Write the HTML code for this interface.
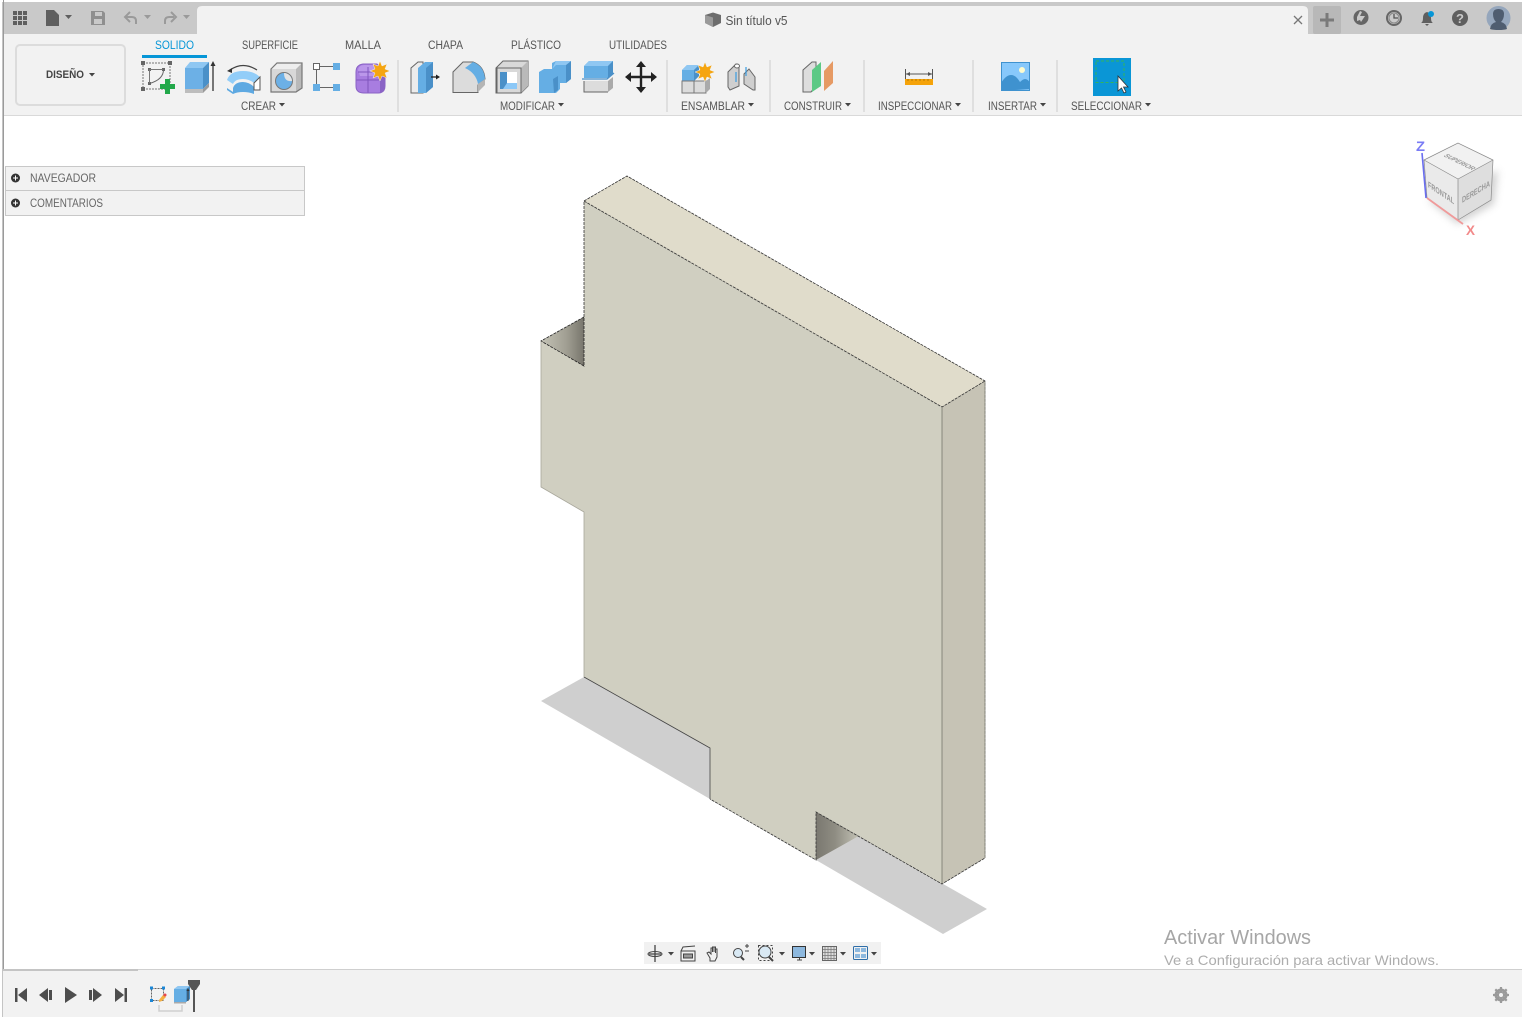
<!DOCTYPE html>
<html lang="es">
<head>
<meta charset="utf-8">
<title>Sin título v5</title>
<style>
html,body{margin:0;padding:0;width:1522px;height:1017px;overflow:hidden;background:#fff}
svg{display:block}
text{font-family:"Liberation Sans",sans-serif}
.t{font-size:11.5px;fill:#555}
</style>
</head>
<body>
<svg width="1522" height="1017" viewBox="0 0 1522 1017" xmlns="http://www.w3.org/2000/svg">
<defs>
<filter id="blur" x="-30%" y="-30%" width="160%" height="160%"><feGaussianBlur stdDeviation="4"/></filter>
<linearGradient id="nl" x1="0" y1="0" x2="1" y2="0"><stop offset="0" stop-color="#c4c3b6"/><stop offset="0.6" stop-color="#a09e92"/><stop offset="1" stop-color="#77756c"/></linearGradient>
<linearGradient id="nb" x1="0" y1="0" x2="1" y2="0"><stop offset="0" stop-color="#7a7870"/><stop offset="0.45" stop-color="#8f8d83"/><stop offset="1" stop-color="#c4c3b6"/></linearGradient>
</defs>

<!-- chrome -->
<rect width="1522" height="1017" fill="#fff"/>
<rect x="3" y="2" width="1519" height="32" fill="#c9c9c9"/>
<path d="M197 34V11q0-5 5-5H1303q5 0 5 5V34Z" fill="#f2f2f2"/>
<rect x="3" y="34" width="1519" height="81" fill="#f2f2f2"/>
<rect x="3" y="115" width="1519" height="1" fill="#d9d9d9"/>
<rect x="3" y="0" width="1" height="1017" fill="#9a9a9a"/>
<rect x="2" y="2" width="1" height="1015" fill="#c4c4c4"/>

<!-- top left icons -->
<g fill="#5f5f5f">
<rect x="13" y="11" width="4" height="4"/><rect x="18" y="11" width="4" height="4"/><rect x="23" y="11" width="4" height="4"/>
<rect x="13" y="16" width="4" height="4"/><rect x="18" y="16" width="4" height="4"/><rect x="23" y="16" width="4" height="4"/>
<rect x="13" y="21" width="4" height="4"/><rect x="18" y="21" width="4" height="4"/><rect x="23" y="21" width="4" height="4"/>
<path d="M46 10h8l5 5v11H46Z"/>
<path d="M65 15h7l-3.500 4Z"/>
</g>
<path fill-rule="evenodd" d="M91 11h12l2 2v12H91ZM95 12v4h7v-4ZM94 19v5h8v-5Z" fill="#8f8f8f"/>
<g fill="none" stroke="#9a9a9a" stroke-width="2"><path d="M136 24v-3q0-4-4-4h-6"/><path d="M130 12l-5 5 5 5"/><path d="M165 24v-3q0-4 4-4h5"/><path d="M171 12l5 5-5 5"/></g>
<path d="M144 15h7l-3.500 4ZM183 15h7l-3.500 4Z" fill="#9a9a9a"/>

<!-- title -->
<path d="M705 15l8-2.500 8 2.500v8l-8 4-8-4Z" fill="#6d6d6d"/><path d="M705 15l8 2.500v9.500l-8-4Z" fill="#9a9a9a"/>
<text x="725.500" y="25" font-size="12.500" fill="#555" textLength="62" lengthAdjust="spacingAndGlyphs">Sin título v5</text>
<path d="M1294 16l8 8M1302 16l-8 8" stroke="#777" stroke-width="1.300"/>

<!-- top right icons -->
<rect x="1313" y="6" width="28" height="28" rx="2" fill="#b8b8b8"/>
<path d="M1327 13v14M1320 20h14" stroke="#7a7a7a" stroke-width="3"/>
<circle cx="1361" cy="17.500" r="7.500" fill="#666"/><path d="M1357 17l3-6 2 1-2 4 5 0-4 6-1-2-3 1Z" fill="#c9c9c9"/>
<circle cx="1394" cy="18" r="7" fill="none" stroke="#666" stroke-width="2"/><circle cx="1394" cy="18" r="5" fill="none" stroke="#888"/><path d="M1394 14v4h4" fill="none" stroke="#555" stroke-width="1.300"/>
<path d="M1421 23q2-1 2-5 0-5 4-6 4 1 4 6 0 4 2 5Z M1425 24h4l-2 2Z" fill="#5f5f5f"/><circle cx="1431" cy="14" r="3" fill="#0696d7"/>
<circle cx="1460" cy="18" r="8" fill="#5f5f5f"/>
<text x="1460" y="23" font-size="13" font-weight="bold" fill="#c9c9c9" text-anchor="middle">?</text>
<circle cx="1498.500" cy="18" r="12" fill="#95a6bc"/>
<path d="M1490 29q1-6 6-7-3-3-3-8 0-5 5.500-5 5.500 0 5.500 5 0 5-3 8 5 1 6 7-3 1-8 1-6 0-9-1Z" fill="#4f5d70"/>

<!-- tabs -->
<g class="t">
<text x="155" y="49" textLength="39" lengthAdjust="spacingAndGlyphs" style="fill:#0696d7">SOLIDO</text>
<text x="242" y="49" textLength="56" lengthAdjust="spacingAndGlyphs">SUPERFICIE</text>
<text x="345" y="49" textLength="36" lengthAdjust="spacingAndGlyphs">MALLA</text>
<text x="428" y="49" textLength="35" lengthAdjust="spacingAndGlyphs">CHAPA</text>
<text x="511" y="49" textLength="50" lengthAdjust="spacingAndGlyphs">PLÁSTICO</text>
<text x="609" y="49" textLength="58" lengthAdjust="spacingAndGlyphs">UTILIDADES</text>
</g>
<rect x="142" y="55" width="65" height="3" fill="#0696d7"/>

<!-- diseño -->
<rect x="16" y="45" width="109" height="60" rx="4" fill="#f2f2f2" stroke="#dcdcdc" stroke-width="2"/>
<text x="46" y="78" font-size="11" font-weight="bold" fill="#444" textLength="38" lengthAdjust="spacingAndGlyphs">DISEÑO</text>
<path d="M89 73h6l-3 3.500Z" fill="#444"/>

<!-- group labels -->
<g class="t">
<text x="241" y="110" textLength="35" lengthAdjust="spacingAndGlyphs">CREAR</text>
<text x="500" y="110" textLength="55" lengthAdjust="spacingAndGlyphs">MODIFICAR</text>
<text x="681" y="110" textLength="64" lengthAdjust="spacingAndGlyphs">ENSAMBLAR</text>
<text x="784" y="110" textLength="58" lengthAdjust="spacingAndGlyphs">CONSTRUIR</text>
<text x="878" y="110" textLength="74" lengthAdjust="spacingAndGlyphs">INSPECCIONAR</text>
<text x="988" y="110" textLength="49" lengthAdjust="spacingAndGlyphs">INSERTAR</text>
<text x="1071" y="110" textLength="71" lengthAdjust="spacingAndGlyphs">SELECCIONAR</text>
</g>
<path d="M279 103h6l-3 3.500ZM558 103h6l-3 3.500ZM748 103h6l-3 3.500ZM845 103h6l-3 3.500ZM955 103h6l-3 3.500ZM1040 103h6l-3 3.500ZM1145 103h6l-3 3.500Z" fill="#444"/>
<g fill="#dfdfdf"><rect x="397" y="60" width="2" height="52"/><rect x="666" y="60" width="2" height="52"/><rect x="769" y="60" width="2" height="52"/><rect x="863" y="60" width="2" height="52"/><rect x="972" y="60" width="2" height="52"/><rect x="1056" y="60" width="2" height="52"/></g>

<!-- CREAR icons -->
<rect x="143" y="63" width="27" height="26" fill="none" stroke="#777" stroke-dasharray="2 1"/>
<g fill="#666"><rect x="141" y="61" width="4" height="4"/><rect x="168" y="61" width="4" height="4"/><rect x="141" y="87" width="4" height="4"/><rect x="148" y="68" width="3" height="3"/><rect x="162" y="68" width="3" height="3"/><rect x="148" y="82" width="3" height="3"/></g>
<path d="M149.500 69.500v14M149.500 69.500h14" stroke="#777" fill="none"/><path d="M163.500 69.500q0 10-14 14" stroke="#666" fill="none"/>
<path d="M165 79h5v5h5v5h-5v5h-5v-5h-5v-5h5Z" fill="#22a84a"/>

<path d="M185 68h18v21h-18Z" fill="#6cb0e6"/><path d="M185 68l5-6h19l-6 6Z" fill="#8fc7f2"/><path d="M203 68l6-6v21l-6 6Z" fill="#4a90c8"/>
<path d="M185 89h18v4h-18Z" fill="#bdbdbd"/><path d="M203 89l6-6v4l-6 6Z" fill="#9a9a9a"/>
<path d="M213 91V65" stroke="#333" stroke-width="1.300"/><path d="M213 61l-2.500 5h5Z" fill="#333"/>

<path d="M230 70q13-9 27 0" fill="none" stroke="#444" stroke-width="1.200"/><path d="M227 71l5-3 0 5Z" fill="#333"/>
<path d="M227 80q3-9 16-9 11 0 17 6l-6 6q-5-4-11-4-8 0-10 5Z" fill="#92cdf8"/>
<path d="M227 80v8l6 4v-4q2-6 10-6 6 0 11 5v7q-5-2-11-2-6 0-10 2l-6-4Z" fill="#5ea9e2"/>
<path d="M254 83l6-6v13l-6 0Z" fill="#fff" stroke="#555"/>

<path d="M271 69l6-6h25v25l-6 4h-25Z" fill="#d8d8d8"/><path d="M296 69l6-6v24l-6 5Z" fill="#b9b9b9"/><path d="M271 69l6-6h25l-6 6Z" fill="#eee"/>
<path d="M271 69l6-6h25v25l-6 4h-25Z" fill="none" stroke="#777" stroke-width="1.200"/>
<circle cx="284" cy="81" r="8.500" fill="#6cb0e6" stroke="#777"/><path d="M284 73a8 8 0 0 1 8 8q-8 1-8-8Z" fill="#e3e3e3"/>

<rect x="313.500" y="63.500" width="6" height="6" fill="#fff" stroke="#666"/>
<rect x="333" y="63" width="7" height="7" fill="#65aee4"/><rect x="313" y="84" width="7" height="7" fill="#65aee4"/><rect x="333" y="84" width="7" height="7" fill="#65aee4"/>
<path d="M320 66.500h13M316.500 70v14M320 87.500h13" stroke="#666" fill="none"/>

<path d="M356 72q0-7 7-8h14l8 8v14q0 7-7 7h-14q-8 0-8-7Z" fill="#a87de0"/>
<path d="M358 70q1-5 6-5h13l7 7-4 4h-20Z" fill="#bb97ea"/>
<path d="M380 76l5-4v14q0 4-5 7Z" fill="#8a63c5"/>
<path d="M356 80h24M368 67v26M358 72h22" stroke="#7f55bd" fill="none"/>
<path d="M356 72q0-7 7-8h14l8 8v14q0 7-7 7h-14q-8 0-8-7Z" fill="none" stroke="#8a63c5"/>
<path d="M380 61l2 5 5-2-2 5 5 2-5 2 2 5-5-2-2 5-2-5-5 2 2-5-5-2 5-2-2-5 5 2Z" fill="#f5a511" stroke="#f2f2f2" stroke-width="0.500"/>

<!-- MODIFICAR icons -->
<path d="M411 93V68l7-6h5v31Z" fill="#ececec" stroke="#666"/>
<path d="M418 68l7-6h8v25l-7 6h-8Z" fill="#65aee4"/><path d="M426 68l7-6v25l-7 6Z" fill="#4a90c8"/>
<path d="M431 77h6" stroke="#222" stroke-width="1.300"/><path d="M436 74.500l4 2.500-4 2.500Z" fill="#222"/>

<path d="M453 92.500V72l10-10h10q11 4 12 17l-7 6v7.500Z" fill="#dcdcdc" stroke="#666"/>
<path d="M465 68l8-6q11 4 12 17l-7 5q-2-11-13-16Z" fill="#65aee4"/><path d="M478 84l7-5v6l-7 7Z" fill="#b5b5b5"/>

<path d="M496 68l7-7h25v25l-7 7h-25Z" fill="#d9d9d9" stroke="#666"/><path d="M521 68l7-7v25l-7 7Z" fill="#b9b9b9"/><rect x="497" y="68" width="24" height="25" fill="none" stroke="#666"/>
<rect x="500" y="72" width="17" height="17" fill="#fff"/><path d="M500 72h7v11h10v6h-17Z" fill="#4a90c8"/><path d="M507 83h10v6h-14Z" fill="#8cc8f7"/>

<path d="M539 72l5-3h8v-6l4-2h15v18l-5 4h-6v6l-4 4h-17Z" fill="#65aee4"/><path d="M566 65l5-4v18l-5 4ZM553 79l5-3v14l-4 3Z" fill="#4a90c8"/><path d="M552 69l4-8h15l-5 4h-10l-4 4Z" fill="#8fc7f2"/>

<path d="M584 66l5-5h24v13l-5 4h-24Z" fill="#65aee4"/><path d="M584 66l5-5h24l-5 5Z" fill="#8fc7f2"/><path d="M608 66l5-5v13l-5 4Z" fill="#4a90c8"/>
<path d="M582 79h25l7-6" fill="none" stroke="#4a90c8" stroke-width="1.300"/>
<path d="M584 81h24v11h-24Z" fill="#dcdcdc"/><path d="M608 81l5-4v11l-5 4Z" fill="#aaa"/><path d="M584 81v11h24" fill="none" stroke="#666"/>

<path d="M641 66v21M630 77h22" stroke="#222" stroke-width="2.400"/><path d="M641 61l-5 6h10ZM641 93l-5-6h10ZM625 77l6-5v10ZM657 77l-6-5v10Z" fill="#222"/>

<!-- ENSAMBLAR -->
<path d="M682 70l5-5h12v11l-5 5h-12Z" fill="#65aee4"/><path d="M682 70l5-5h12l-5 5Z" fill="#8fc7f2"/><path d="M694 70l5-5v11l-5 5Z" fill="#4a90c8"/>
<path d="M682 81h12v12h-12Z M694 81h12v12h-12Z" fill="#dcdcdc" stroke="#777"/><path d="M706 81l4-3v11l-4 4Z" fill="#aaa"/>
<path d="M705 62l2 5 5-2-2 5 5 2-5 2 2 5-5-2-2 5-2-5-5 2 2-5-5-2 5-2-2-5 5 2Z" fill="#f5a511" stroke="#f2f2f2" stroke-width="0.500"/>
<path d="M728 72l8-8 3 1v21l-9 4-2-3Z" fill="#cfcfcf" stroke="#666"/><ellipse cx="737" cy="66" rx="2.500" ry="2" fill="#fff" stroke="#666"/>
<path d="M744 74l5-5 6 8v13h-2l-9-6Z" fill="#cfcfcf" stroke="#666"/><path d="M736 72v10M746 67v9" stroke="#3a9be0" stroke-width="1.200"/>

<!-- CONSTRUIR -->
<path d="M803 70l9-8h4v24l-5 6h-8Z" fill="#ddd" stroke="#666"/>
<path d="M812 70l9-8v24l-9 6Z" fill="#5cc985"/>
<path d="M824 71l9-10v22l-9 8Z" fill="#e69a64"/>

<!-- INSPECCIONAR -->
<path d="M905.500 69v10M932.500 69v10" stroke="#555"/><path d="M906 74h26" stroke="#555"/><path d="M906 74l4-2v4ZM932 74l-4-2v4Z" fill="#555"/>
<rect x="905" y="79" width="28" height="6" fill="#f5a30a"/>
<path d="M908 79v2M912 79v2M916 79v2M920 79v2M924 79v2M928 79v2" stroke="#b87800"/>

<!-- INSERTAR -->
<rect x="1001" y="62" width="29" height="29" fill="#87c8fb"/>
<path d="M1001 91V83q5-8 10-8 5 0 9 7 3-3 5-3 3 0 5 4v6Z" fill="#3f92cf"/>
<rect x="1001.500" y="62.500" width="28" height="28" fill="none" stroke="#3f92cf"/>
<circle cx="1022" cy="70" r="3" fill="#fdfbcf"/>

<!-- SELECCIONAR -->
<rect x="1093" y="58" width="38" height="38" fill="#0a96d6"/>
<rect x="1096" y="61" width="28" height="21.500" fill="none" stroke="#34b45c" stroke-dasharray="3 2"/>
<path d="M1118 76v15l3.500-3 2.500 5 2-1-2.500-5h4.500Z" fill="#fff" stroke="#333" stroke-width="0.800"/>

<!-- nav panel -->
<rect x="5.500" y="166.500" width="299" height="49" fill="#f2f2f2" stroke="#c8c8c8"/>
<path d="M6 190.500h298" stroke="#c8c8c8"/>
<circle cx="15.500" cy="178" r="4.500" fill="#333"/><path d="M13 178h5M15.500 175.500v5" stroke="#fff"/>
<circle cx="15.500" cy="203" r="4.500" fill="#333"/><path d="M13 203h5M15.500 200.500v5" stroke="#fff"/>
<text x="30" y="182" font-size="11.500" fill="#666" textLength="66" lengthAdjust="spacingAndGlyphs">NAVEGADOR</text>
<text x="30" y="207" font-size="11.500" fill="#666" textLength="73" lengthAdjust="spacingAndGlyphs">COMENTARIOS</text>

<!-- shadows -->
<path d="M584 677L541 701L710 799V748Z" fill="#cfcfcf"/>
<path d="M816 860L859 836L987 909L943 934Z" fill="#cfcfcf"/>

<!-- solid -->
<path d="M584 201L627 176L985 381L942 407Z" fill="#e0dccb"/>
<path d="M942 407L985 381V858L942 884Z" fill="#c6c3b5"/>
<path d="M584 201L942 407V884L816 812V860L710 799V748L584 677V512L541 487V341L584 366Z" fill="#d0cfc1"/>
<path d="M541 341L584 317V366Z" fill="url(#nl)"/>
<path d="M816 812V860L859 836Z" fill="url(#nb)"/>
<g fill="none" stroke="#333" stroke-width="0.800">
<path d="M584 317V201L627 176L985 381V858L942 884L816 812V860L710 799" stroke-dasharray="3 1"/>
<path d="M584 201L942 407L985 381" stroke-dasharray="3 1"/>
<path d="M584 317L541 341L584 366V317" stroke="#222" stroke-dasharray="3 1"/>
<path d="M710 799V748L584 677" stroke="#444"/>
<path d="M584 677V512L541 487V341" stroke="#a8a79b"/>
<path d="M985 381V858" stroke="#8d8c80"/>
</g>
<path d="M942 407V884" stroke="#77766b" stroke-width="0.800"/>

<!-- view cube -->
<path d="M1428 200L1458 224L1494 204L1498 170L1460 190Z" fill="#999" opacity="0.450" filter="url(#blur)"/>
<path d="M1424 160L1458 143L1493 160L1458 179Z" fill="#f1f1f1"/>
<path d="M1424 160L1458 179V220L1427 198Z" fill="#eaeaea"/>
<path d="M1458 179L1493 160L1491 200L1458 220Z" fill="#dedede"/>
<path d="M1424 160L1458 143L1493 160L1491 200L1458 220L1427 198ZM1424 160L1458 179L1493 160M1458 179V220" fill="none" stroke="#8b8b8b" stroke-width="0.700"/>
<text font-size="8" font-weight="bold" fill="#999" transform="matrix(.85 .42 -.85 .42 1443 156)" textLength="34" lengthAdjust="spacingAndGlyphs">SUPERIOR</text>
<text font-size="8.500" font-weight="bold" fill="#999" transform="matrix(.9 .6 0 1 1428 187)" textLength="29" lengthAdjust="spacingAndGlyphs">FRONTAL</text>
<text font-size="8.500" font-weight="bold" fill="#999" transform="matrix(.9 -.55 0 1 1462 203)" textLength="31" lengthAdjust="spacingAndGlyphs">DERECHA</text>
<path d="M1422 153L1426 198" stroke="#6a6ef0" stroke-width="1.600"/>
<path d="M1427 198L1463 224" stroke="#f09a9a" stroke-width="1.800"/>
<text x="1416" y="151" font-size="14" font-weight="bold" fill="#7a7cf5" textLength="9" lengthAdjust="spacingAndGlyphs">Z</text>
<text x="1466" y="235" font-size="14" font-weight="bold" fill="#f28a8a" textLength="9" lengthAdjust="spacingAndGlyphs">X</text>

<!-- nav bar -->
<rect x="644" y="942" width="237" height="22" fill="#f1f1f1"/>
<g fill="none" stroke="#444">
<path d="M655 945v17M649 954h12" stroke-width="1.300"/><ellipse cx="655" cy="954" rx="7" ry="2.500"/>
<rect x="681" y="951" width="14" height="10"/><rect x="683.500" y="954" width="9" height="4" fill="#999"/><path d="M681 951l2-4 12-1"/>
<path d="M710 958l-3-5 2-1 2 2v-6h1.500v4-5h1.500v5-5h1.500v6-4h1.500v8l-2 4h-5Z"/>
<circle cx="738" cy="953" r="4.500" fill="#d9e9f4"/><path d="M741 957l3 3" stroke-width="2"/><path d="M745 946h4M747 944v4M745 951h4"/>
<circle cx="765" cy="952" r="6" fill="#d9e9f4"/><path d="M769 957l4 4" stroke-width="2"/><rect x="758.500" y="945.500" width="14" height="15" stroke-dasharray="2 2"/>
<rect x="792.500" y="946.500" width="13" height="11" fill="#8db8de" stroke="#333"/><path d="M797 960h5M799.500 957.500v3"/>
<rect x="822.500" y="946.500" width="14" height="14" fill="#ddd" stroke="#666"/><path d="M825 947v13M828 947v13M831 947v13M834 947v13M823 949.500h13M823 952.500h13M823 955.500h13M823 958.500h13" stroke="#777" stroke-width="0.700"/>
<rect x="853.500" y="946.500" width="14" height="13" rx="1" stroke="#2f6ea8"/>
</g>
<path d="M855 948h5v4h-5ZM861 948h5v4h-5ZM855 954h5v4h-5ZM861 954h5v4h-5Z" fill="#8db8de"/>
<path d="M668 952h6l-3 3.500ZM779 952h6l-3 3.500ZM809 952h6l-3 3.500ZM840 952h6l-3 3.500ZM871 952h6l-3 3.500Z" fill="#444"/>

<!-- watermark -->
<text x="1164" y="944" font-size="20" fill="#a6a6a6" textLength="147" lengthAdjust="spacingAndGlyphs">Activar Windows</text>
<text x="1164" y="965" font-size="14" fill="#adadad" textLength="275" lengthAdjust="spacingAndGlyphs">Ve a Configuración para activar Windows.</text>

<!-- timeline -->
<rect x="3" y="970" width="1519" height="47" fill="#f2f2f2"/>
<rect x="3" y="969" width="135" height="2" fill="#c4c4c4"/>
<rect x="138" y="969" width="1384" height="1" fill="#cfcfcf"/>
<g fill="#4d4d4d">
<rect x="15" y="988" width="2.500" height="14"/><path d="M27 988v14l-9-7Z"/>
<path d="M39 995l9-7v14Z"/><rect x="49" y="990" width="3" height="10"/>
<path d="M65 987l12 8-12 8Z"/>
<rect x="89" y="990" width="3" height="10"/><path d="M93 988l9 7-9 7Z"/>
<path d="M115 988l9 7-9 7Z"/><rect x="124.500" y="988" width="2.500" height="14"/>
</g>
<rect x="151.500" y="988.500" width="12" height="12" fill="none" stroke="#666" stroke-dasharray="2 1"/>
<rect x="150" y="986.500" width="3" height="3" fill="#1b86d6"/><rect x="162" y="986.500" width="3" height="3" fill="#1b86d6"/><rect x="150" y="999" width="3" height="3" fill="#1b86d6"/>
<path d="M159 1000l4-5 3 2-4 4-3 1Z" fill="#f5b041"/><circle cx="165" cy="995" r="1.500" fill="#e8474c"/>
<path d="M174 989l4-3h12v13l-4 3h-12Z" fill="#65aee4"/><path d="M186 989l4-3v13l-4 3Z" fill="#4a90c8"/><path d="M174 989l4-3h12l-4 3Z" fill="#8fc7f2"/><rect x="174" y="1002" width="12" height="1.500" fill="#aaa"/>
<path d="M188 1001v-11" stroke="#333"/><path d="M188 988l-1.500 3h3Z" fill="#333"/>
<path d="M159 1005v6h23v-6" fill="none" stroke="#cfcfcf" stroke-width="1.500"/>
<path d="M188 980h12v4l-4 6h-4l-4-6Z" fill="#555"/><rect x="193" y="988" width="2" height="24" fill="#555"/>

<!-- gear -->
<circle cx="1501" cy="995" r="5" fill="none" stroke="#9a9a9a" stroke-width="3"/>
<path d="M1501 987v16M1493 995h16M1495.300 989.300l11.400 11.400M1506.700 989.300l-11.400 11.400" stroke="#9a9a9a" stroke-width="2.200"/>
<circle cx="1501" cy="995" r="2" fill="#f2f2f2"/>
</svg>
</body>
</html>
